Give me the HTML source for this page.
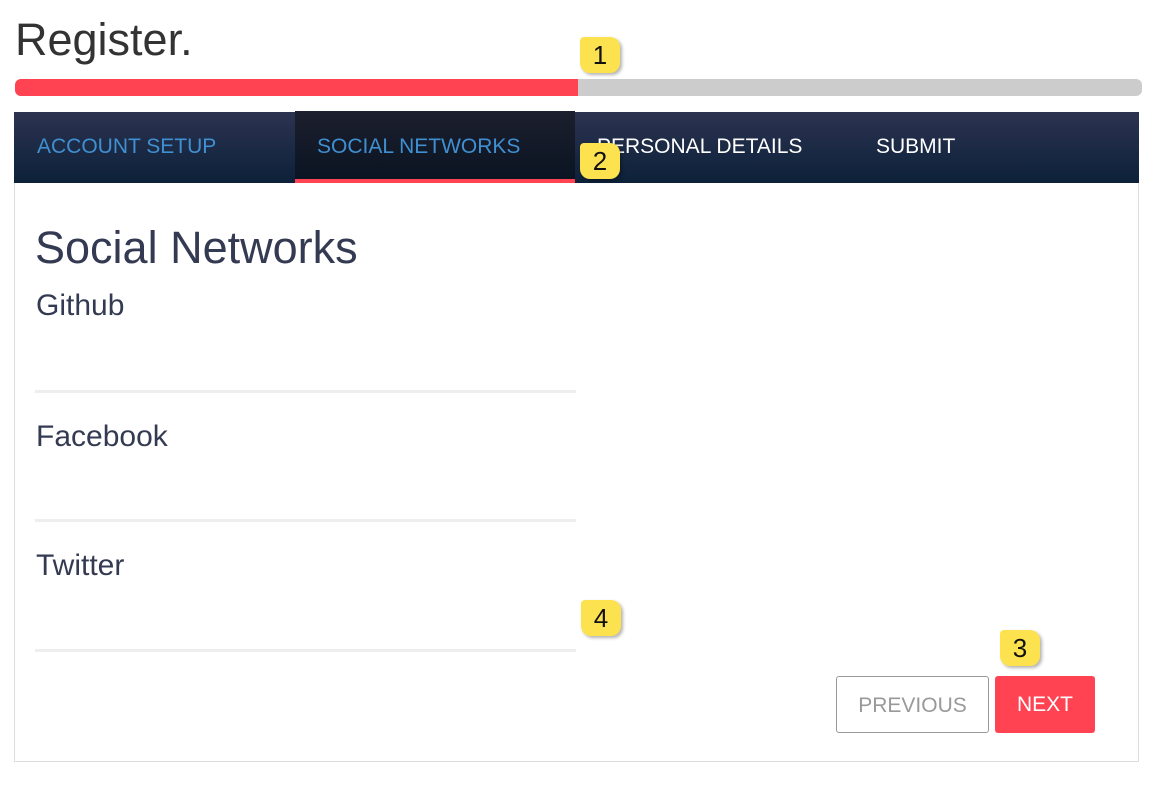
<!DOCTYPE html>
<html><head><style>
body{margin:0;width:1164px;height:786px;background:#fff;font-family:"Liberation Sans",sans-serif;position:relative;overflow:hidden}
.a{position:absolute}
.badge{position:absolute;width:40px;height:36px;background:#fde24f;border-radius:4px 10px 10px 10px;box-shadow:2px 2px 3px rgba(0,0,0,.3);font-size:26px;color:#111;text-align:center;line-height:36px}
.lbl{position:absolute;left:36px;font-size:30px;color:#333a52}
.line{position:absolute;left:35px;width:541px;height:3px;background:#eeeeee}
.nav{position:absolute;top:135px;font-size:21px}
</style></head><body>
<div class="a" style="left:15px;top:14px;font-size:45px;color:#333">Register.</div>
<div class="a" style="left:15px;top:79px;width:1127px;height:17px;background:#cccccc;border-radius:6px"></div>
<div class="a" style="left:15px;top:79px;width:563px;height:17px;background:#ff4353;border-radius:6px 0 0 6px"></div>
<div class="a" style="left:14px;top:112px;width:1125px;height:71px;background:linear-gradient(#2c3350,#0c2139)"></div>
<div class="a" style="left:295px;top:111px;width:280px;height:69px;background:linear-gradient(#1c1f2e,#0a1422)"></div>
<div class="a" style="left:295px;top:179px;width:280px;height:4px;background:#ff4353"></div>
<div class="nav" style="left:37px;color:#3f8fd1">ACCOUNT SETUP</div>
<div class="nav" style="left:317px;color:#3f8fd1">SOCIAL NETWORKS</div>
<div class="nav" style="left:597px;color:#fff">PERSONAL DETAILS</div>
<div class="nav" style="left:876px;color:#fff">SUBMIT</div>
<div class="a" style="left:14px;top:183px;width:1123px;height:578px;border:1px solid #ddd;border-top:none"></div>
<div class="a" style="left:35px;top:222px;font-size:45px;color:#333a52">Social Networks</div>
<div class="lbl" style="top:289px">Github</div>
<div class="line" style="top:390px"></div>
<div class="lbl" style="top:420px">Facebook</div>
<div class="line" style="top:519px"></div>
<div class="lbl" style="top:549px">Twitter</div>
<div class="line" style="top:649px"></div>
<div class="a" style="left:836px;top:676px;width:151px;height:55px;border:1px solid #999;border-radius:3px;color:#999;font-size:21px;text-align:center;line-height:57px">PREVIOUS</div>
<div class="a" style="left:995px;top:676px;width:100px;height:57px;background:#ff4353;border-radius:3px;color:#fff;font-size:21px;text-align:center;line-height:58px">NEXT</div>
<div class="badge" style="left:580px;top:37px">1</div>
<div class="badge" style="left:580px;top:143px">2</div>
<div class="badge" style="left:1000px;top:630px">3</div>
<div class="badge" style="left:581px;top:600px">4</div>
</body></html>
